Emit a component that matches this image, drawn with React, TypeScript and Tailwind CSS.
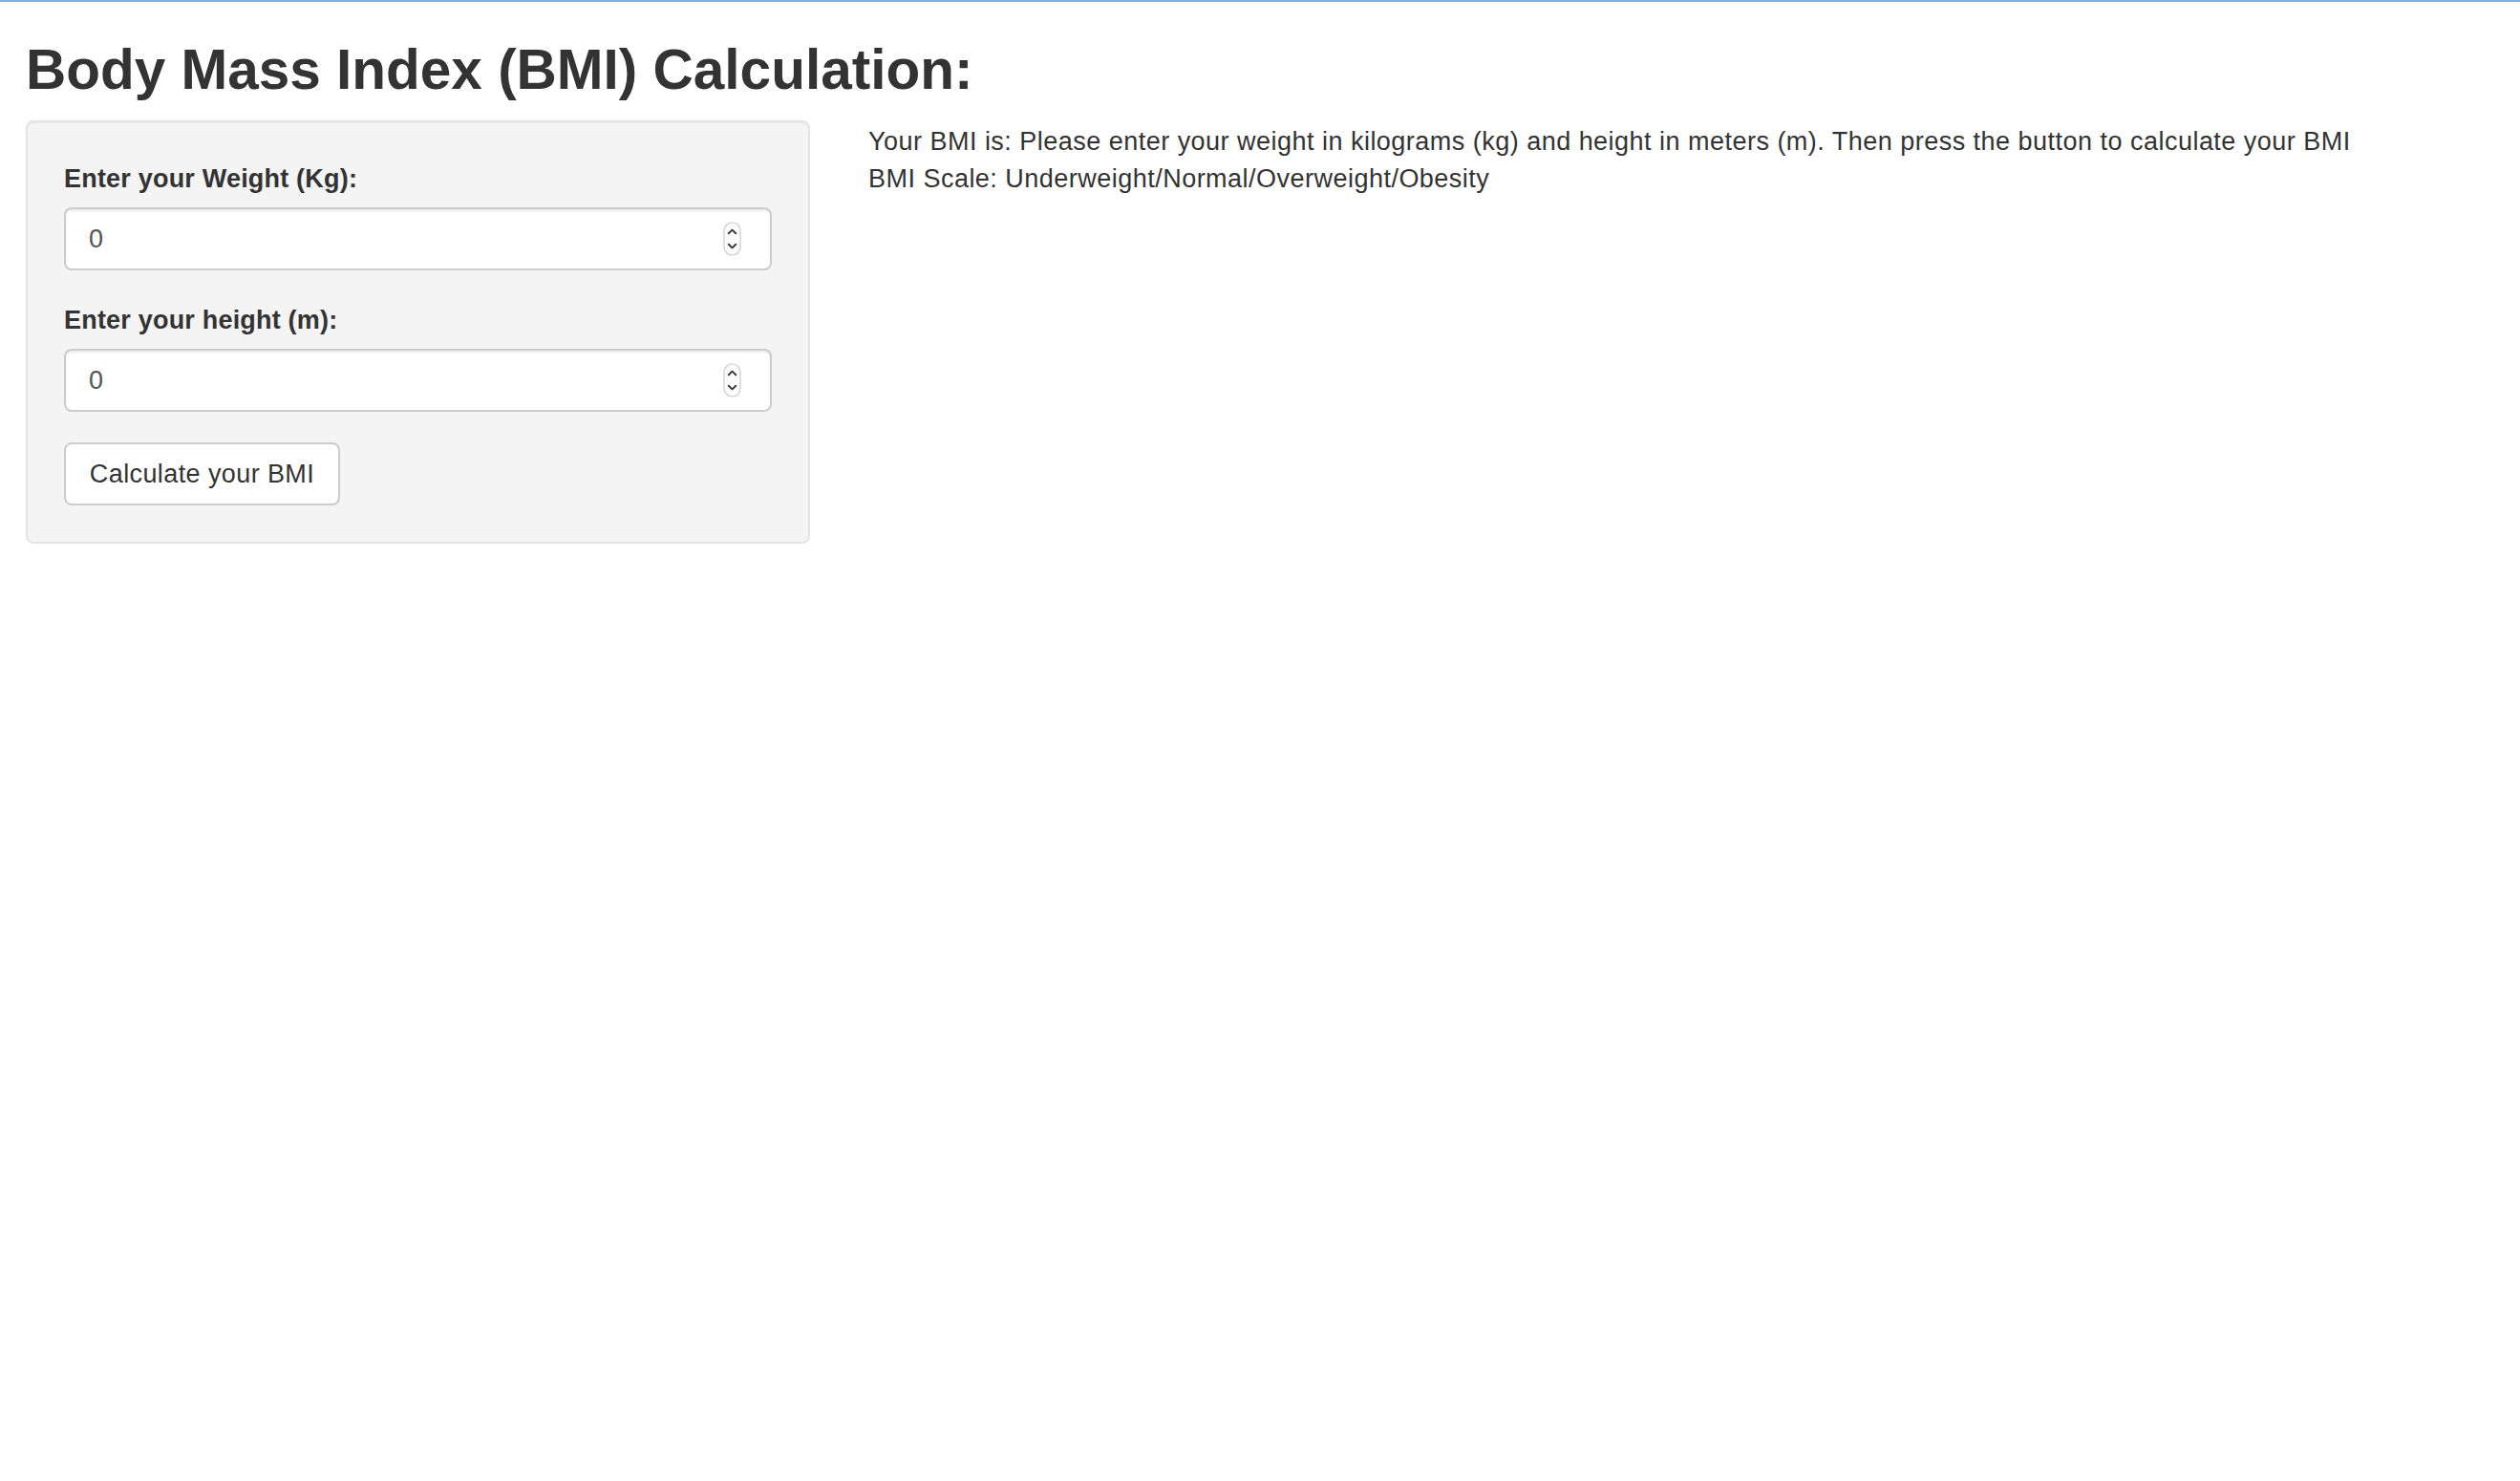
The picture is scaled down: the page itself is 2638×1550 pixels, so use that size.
import React from 'react';

// Little up/down stepper drawn like the browser's native number spinner
const Spinner: React.FC = () => (
  <svg width="19" height="36" viewBox="0 0 19 36" className="shrink-0">
    <rect x="1" y="1" width="17" height="34" rx="8.5" fill="#fff" stroke="#c9c9c9" strokeWidth="1.2" />
    <path d="M5.8 12.2 L9.5 8.6 L13.2 12.2" fill="none" stroke="#3a3a3a" strokeWidth="2" strokeLinecap="round" strokeLinejoin="round" />
    <path d="M5.8 23.8 L9.5 27.4 L13.2 23.8" fill="none" stroke="#3a3a3a" strokeWidth="2" strokeLinecap="round" strokeLinejoin="round" />
  </svg>
);

interface NumberFieldProps {
  label: string;
  value: string;
  className?: string;
}

const NumberField: React.FC<NumberFieldProps> = ({ label, value, className }) => (
  <div className={className}>
    <label className="block font-bold leading-[39px] mb-[10px] tracking-[0.2px]">{label}</label>
    <div className="flex items-center h-[66px] bg-white border-2 border-[#cccccc] rounded-[8px] pl-[24px] pr-[30px] shadow-[inset_0_2px_2px_rgba(0,0,0,0.075)]">
      <span className="flex-1 text-[#555555] leading-[39px]">{value}</span>
      <Spinner />
    </div>
  </div>
);

const App: React.FC = () => {
  return (
    <div className="min-h-screen bg-white text-[#333333] text-[27px] font-['Liberation_Sans',Arial,sans-serif]">
      <div className="h-[2px] bg-[#8aaadc]" />

      <div className="px-[27px]">
        <h2 className="text-[58.5px] font-bold leading-[64px] mt-[39px] mb-[21px]">
          Body Mass Index (BMI) Calculation:
        </h2>

        <div className="flex items-start">
          {/* sidebar panel */}
          <div className="w-[821px] shrink-0 bg-[#f4f4f4] border-2 border-[#e3e3e3] rounded-[8px] pt-[40px] pb-[38px] px-[38px] shadow-[inset_0_1px_1px_rgba(0,0,0,0.05)]">
            <NumberField label="Enter your Weight (Kg):" value="0" className="mb-[33px]" />
            <NumberField label="Enter your height (m):" value="0" className="mb-[32px]" />
            <button className="w-[289px] h-[66px] bg-white border-2 border-[#cccccc] rounded-[8px] text-[#333333] leading-[39px] tracking-[0.4px]">
              Calculate your BMI
            </button>
          </div>

          {/* main panel */}
          <div className="ml-[61px] mt-[3px] leading-[39px] tracking-[0.48px]">
            <div>
              Your BMI is: Please enter your weight in kilograms (kg) and height in meters (m). Then press the button to calculate your BMI
            </div>
            <div>BMI Scale: Underweight/Normal/Overweight/Obesity</div>
          </div>
        </div>
      </div>
    </div>
  );
};

export default App;
